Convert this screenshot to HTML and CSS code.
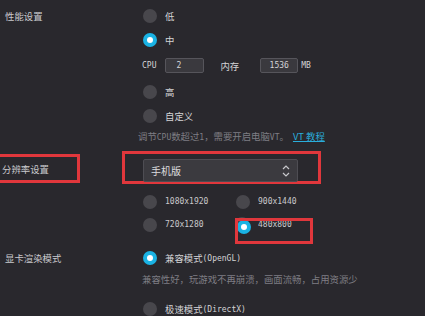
FILE: index.html
```html
<!DOCTYPE html>
<html>
    <head>
        <title>设置</title>
        <link rel="stylesheet" href="styles.css">
    </head>
    <body>
        <div class="settings">
            <div class="row perf">
                <div class="label">性能设置</div>
                <div class="field">
                    <div class="radio"><span class="dot"></span>低</div>
                    <div class="radio on"><span class="dot"></span>中</div>
                    <div class="spec">
                        <span class="en">CPU</span>
                        <span class="box">2</span>
                        <span class="mem">内存</span>
                        <span class="box wide">1536</span>
                        <span class="en">MB</span>
                    </div>
                    <div class="radio high"><span class="dot"></span>高</div>
                    <div class="radio"><span class="dot"></span>自定义</div>
                    <div class="hint">调节<span class="en">CPU</span>数超过<span class="en">1</span>，需要开启电脑<span class="en">VT</span>。 <a class="link">VT 教程</a></div>
                </div>
            </div>
            <div class="row res">
                <div class="label marked">分辨率设置</div>
                <div class="field">
                    <div class="select-wrap">
                        <div class="select">
                            <span>手机版</span>
                            <svg class="arrows" width="8" height="14" viewBox="0 0 8 14">
                                <path d="M1 5 L4 2 L7 5" fill="none" stroke="#c8c8cc" stroke-width="1.2"/>
                                <path d="M1 9 L4 12 L7 9" fill="none" stroke="#c8c8cc" stroke-width="1.2"/>
                            </svg>
                        </div>
                    </div>
                    <div class="res-grid">
                        <div class="radio"><span class="dot"></span><span class="en">1080x1920</span></div>
                        <div class="radio"><span class="dot"></span><span class="en">900x1440</span></div>
                        <div class="radio"><span class="dot"></span><span class="en">720x1280</span></div>
                        <div class="radio on clicked"><span class="dot"></span><span class="en">480x800</span><span class="mark"></span></div>
                    </div>
                </div>
            </div>
            <div class="row gpu">
                <div class="label">显卡渲染模式</div>
                <div class="field">
                    <div class="radio on"><span class="dot"></span>兼容模式<span class="en">(OpenGL)</span></div>
                    <div class="hint desc">兼容性好，玩游戏不再崩溃，画面流畅，占用资源少</div>
                    <div class="radio fast"><span class="dot"></span>极速模式<span class="en">(DirectX)</span></div>
                </div>
            </div>
        </div>
    </body>
</html>
```

FILE: styles.css
```css
body {
    margin: 0;
    background-color: #29282d;
    color: #d4d4d6;
    font-family: "Noto Sans CJK SC", "Liberation Sans", sans-serif;
    font-size: 9.4px;
    overflow: hidden;
}
.settings {
    padding-top: 4px;
}
.row {
    display: grid;
    grid-template-columns: 138px 1fr;
}
.label {
    padding-left: 5px;
    line-height: 24px;
    color: #cacacd;
}
.en {
    font-family: "DejaVu Sans Mono", monospace;
    font-size: 8px;
}
.radio {
    display: flex;
    align-items: center;
    height: 24px;
    padding-left: 5px;
    position: relative;
}
.dot {
    width: 14px;
    height: 14px;
    border-radius: 50%;
    background-color: #48474c;
    margin-right: 8px;
    flex-shrink: 0;
    position: relative;
}
.radio.on .dot {
    background-color: #1ab3e4;
}
.radio.on .dot::after {
    content: "";
    position: absolute;
    left: 4px;
    top: 4px;
    width: 6px;
    height: 6px;
    border-radius: 50%;
    background-color: #fff;
}
.spec {
    display: flex;
    align-items: center;
    height: 15px;
    margin-top: 6px;
    padding-left: 4px;
}
.box {
    height: 13px;
    margin-left: 9px;
    border: 1px solid #56555b;
    border-radius: 2px;
    background-color: #3a393e;
    font-family: "DejaVu Sans Mono", monospace;
    font-size: 8px;
    line-height: 13px;
    padding-left: 10px;
    width: 27px;
}
.box.wide {
    width: 36px;
    padding-left: 0;
    text-align: center;
    margin-left: 21px;
    margin-right: 3px;
}
.mem {
    margin-left: 16px;
}
.radio.high {
    margin-top: 7px;
}
.hint {
    height: 14px;
    line-height: 14px;
    margin-top: 1px;
    color: #7f7e84;
    white-space: nowrap;
}
.link {
    color: #2aaedc;
    text-decoration: underline;
    margin-left: 2px;
}
.res {
    margin-top: 8px;
}
.label.marked {
    align-self: start;
    width: 75px;
    height: 23px;
    margin-top: 3px;
    padding-left: 2px;
    border: 3px solid #e0373c;
    border-left-width: 0;
}
.select-wrap {
    box-sizing: border-box;
    margin-left: -16px;
    width: 199px;
    height: 33px;
    padding: 5px 0 0 18px;
    border: 3px solid #e0373c;
}
.select {
    display: flex;
    align-items: center;
    justify-content: space-between;
    box-sizing: border-box;
    width: 155px;
    height: 23px;
    padding: 0 7px 0 7px;
    background-color: #3b3a3f;
    border: 1px solid #4e4d53;
    border-radius: 2px;
    color: #dcdcde;
    font-size: 10px;
}
.res-grid {
    display: grid;
    grid-template-columns: 93px 1fr;
    grid-auto-rows: 23px;
    margin-top: 6px;
}
.res-grid .radio {
    height: 23px;
}
.res-grid .en {
    color: #c9c9cc;
}
.radio.clicked .dot {
    background-color: #48474c;
    transform: translate(-1px, -1px);
}
.radio.clicked .dot::before {
    content: "";
    position: absolute;
    left: 2px;
    top: 3px;
    width: 14px;
    height: 14px;
    border-radius: 50%;
    background-color: #1ab3e4;
}
.radio.clicked .dot::after {
    left: 6px;
    top: 7px;
}
.mark {
    position: absolute;
    left: 4px;
    top: 5px;
    width: 72px;
    height: 20px;
    border: 3px solid #e0373c;
}
.gpu .label {
    padding-top: 10px;
}
.gpu .field .radio:first-child {
    margin-top: 10px;
}
.hint.desc {
    margin-top: 2px;
    padding-left: 4px;
}
.radio.fast {
    margin-top: 11px;
}
```
